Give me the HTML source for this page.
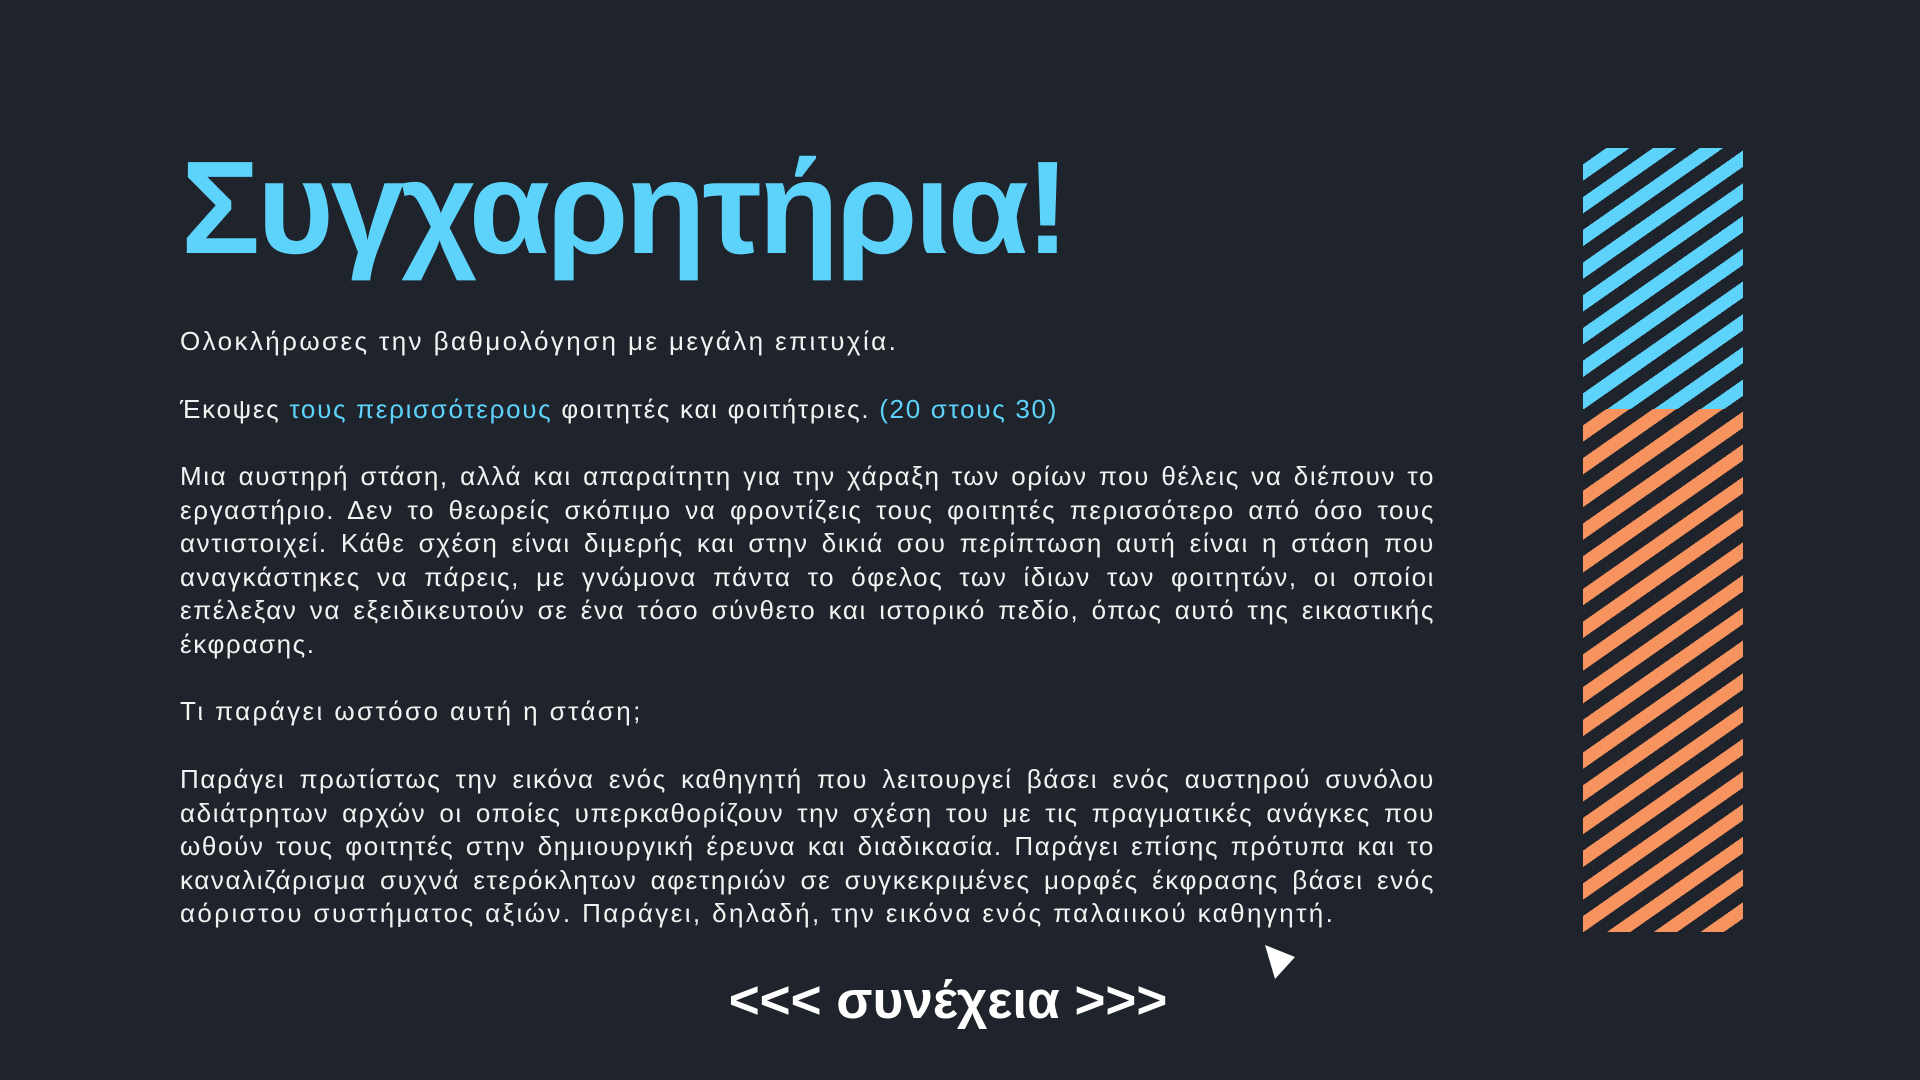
<!DOCTYPE html>
<html><head><meta charset="utf-8"><style>
html,body{margin:0;padding:0;}
body{width:1920px;height:1080px;background:#1f232b;position:relative;overflow:hidden;font-family:"Liberation Sans","DejaVu Sans",sans-serif;color:#f2f2f2;}
.t{position:absolute;left:181px;top:143px;font-size:132px;line-height:130px;font-weight:bold;color:#5dd3fb;letter-spacing:-3.2px;white-space:nowrap;}
.p{position:absolute;left:180px;width:1255px;font-size:26px;line-height:33.6px;letter-spacing:2.4px;}
.p div{text-align:justify;text-align-last:justify;white-space:nowrap;letter-spacing:1.6px;}
.p div.l{text-align-last:left;}
.b{color:#5dd3fb;}
.stripe{position:absolute;left:1583px;width:160px;}
.blue{top:148px;height:261px;background:repeating-linear-gradient(145deg,#1f232b 0 13.4px,#5dd3fb 13.4px 26.8px);}
.orange{top:409px;height:523px;background:repeating-linear-gradient(145deg,#1f232b 0 13.4px,#f7935f 13.4px 26.8px);}
.c{position:absolute;left:700px;width:496px;top:971px;text-align:center;font-size:53px;line-height:60px;font-weight:bold;color:#fff;white-space:nowrap;}
</style></head><body>
<div class="t">Συγχαρητήρια!</div>
<div class="p" style="top:325px;">Ολοκλήρωσες την βαθμολόγηση με μεγάλη επιτυχία.</div>
<div class="p" style="top:393px;letter-spacing:1.7px;">Έκοψες <span class="b">τους περισσότερους</span> φοιτητές και φοιτήτριες. <span class="b">(20 στους 30)</span></div>
<div class="p" style="top:460px;">
<div>Μια αυστηρή στάση, αλλά και απαραίτητη για την χάραξη των ορίων που θέλεις να διέπουν το</div>
<div>εργαστήριο. Δεν το θεωρείς σκόπιμο να φροντίζεις τους φοιτητές περισσότερο από όσο τους</div>
<div>αντιστοιχεί. Κάθε σχέση είναι διμερής και στην δικιά σου περίπτωση αυτή είναι η στάση που</div>
<div>αναγκάστηκες να πάρεις, με γνώμονα πάντα το όφελος των ίδιων των φοιτητών, οι οποίοι</div>
<div>επέλεξαν να εξειδικευτούν σε ένα τόσο σύνθετο και ιστορικό πεδίο, όπως αυτό της εικαστικής</div>
<div class="l">έκφρασης.</div>
</div>
<div class="p" style="top:695px;">Τι παράγει ωστόσο αυτή η στάση;</div>
<div class="p" style="top:763px;">
<div>Παράγει πρωτίστως την εικόνα ενός καθηγητή που λειτουργεί βάσει ενός αυστηρού συνόλου</div>
<div>αδιάτρητων αρχών οι οποίες υπερκαθορίζουν την σχέση του με τις πραγματικές ανάγκες που</div>
<div>ωθούν τους φοιτητές στην δημιουργική έρευνα και διαδικασία. Παράγει επίσης πρότυπα και το</div>
<div>καναλιζάρισμα συχνά ετερόκλητων αφετηριών σε συγκεκριμένες μορφές έκφρασης βάσει ενός</div>
<div class="l" style="letter-spacing:2.4px;">αόριστου συστήματος αξιών. Παράγει, δηλαδή, την εικόνα ενός παλαιικού καθηγητή.</div>
</div>
<div class="stripe blue"></div>
<div class="stripe orange"></div>
<svg style="position:absolute;left:0;top:0" width="1920" height="1080"><polygon points="1265,945 1295,957 1275,979" fill="#fff"/></svg>
<div class="c">&lt;&lt;&lt; συνέχεια &gt;&gt;&gt;</div>
</body></html>
